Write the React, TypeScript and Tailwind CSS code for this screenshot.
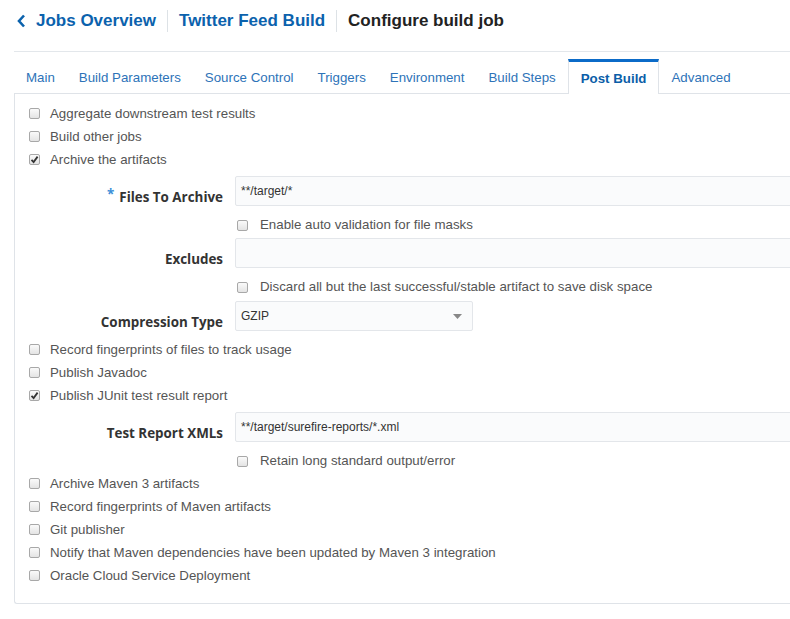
import type { ReactNode } from 'react'

const tabs = ['Main', 'Build Parameters', 'Source Control', 'Triggers', 'Environment', 'Build Steps', 'Post Build', 'Advanced']

function Box({ checked = false }: { checked?: boolean }) {
  return (
    <span className="flex h-[11px] w-[11px] shrink-0 items-center justify-center rounded-[2px] border border-[#a8a8a8] bg-gradient-to-b from-[#fafafa] to-[#e4e4e4]">
      {checked && (
        <svg width="9" height="9" viewBox="0 0 9 9">
          <path d="M1.5 4.8 L3.6 7 L7.6 1.6" fill="none" stroke="#333" strokeWidth="1.8" />
        </svg>
      )}
    </span>
  )
}

function Check({ label, checked, className = '' }: { label: string; checked?: boolean; className?: string }) {
  return (
    <div className={`flex h-[23px] items-center pl-[14px] ${className}`}>
      <Box checked={checked} />
      <span className="ml-[10px] text-[13.3px] text-[#555]">{label}</span>
    </div>
  )
}

function SubCheck({ label, className = '' }: { label: string; className?: string }) {
  return (
    <div className={`mt-[6px] flex h-[26px] items-center pl-[222px] ${className}`}>
      <Box />
      <span className="ml-[12px] text-[13.3px] text-[#555]">{label}</span>
    </div>
  )
}

function Field({ label, required, children, className = '' }: { label: string; required?: boolean; children: ReactNode; className?: string }) {
  return (
    <div className={`flex h-[30px] ${className}`}>
      <div className="w-[220px] shrink-0 pr-[12px] pt-[13px] text-right font-['Open_Sans'] text-[13.4px] font-bold leading-[16px] text-[#333]">
        {required && <span className="relative top-[-3px] mr-[5px] text-[#3c8fd8]">*</span>}
        {label}
      </div>
      {children}
    </div>
  )
}

function TextInput({ value = '' }: { value?: string }) {
  return (
    <div className="flex h-[30px] w-[600px] shrink-0 items-center rounded-[2px] border border-[#e3e6ea] bg-[#fafbfc] px-[5px] text-[12px] text-[#333]">
      {value}
    </div>
  )
}

export default function App() {
  return (
    <div className="h-[619px] w-[790px] overflow-hidden bg-white font-['Liberation_Sans',Arial,sans-serif]">
      {/* Breadcrumb header */}
      <div className="ml-[14px] flex h-[52px] items-start border-b border-[#e3e7eb] pt-[9px]">
        <div className="flex h-[23px] items-center text-[17px] font-bold">
          <svg width="9" height="14" viewBox="0 0 9 14" className="ml-[3px]">
            <path d="M7 1.5 L2 7 L7 12.5" fill="none" stroke="#0b62ad" strokeWidth="2.6" />
          </svg>
          <span className="ml-[10px] text-[#0b62ad]">Jobs Overview</span>
          <span className="mx-[11px] h-[22px] w-px bg-[#dde2e6]" />
          <span className="text-[#0b62ad]">Twitter Feed Build</span>
          <span className="mx-[11px] h-[22px] w-px bg-[#dde2e6]" />
          <span className="text-[#222]">Configure build job</span>
        </div>
      </div>

      {/* Tabs */}
      <div className="ml-[14px] flex h-[42px] items-end border-b border-[#dfe3e8]">
        {tabs.map((t) =>
          t === 'Post Build' ? (
            <div
              key={t}
              className="relative top-px flex h-[35px] items-center border-x border-t-[3px] border-x-[#dfe3e8] border-t-[#0b6bc8] bg-white px-[12px] pt-[1px] text-[13.3px] font-bold text-[#0b5ea8]"
            >
              {t}
            </div>
          ) : (
            <div key={t} className="flex h-[34px] items-center border-x border-transparent px-[11px] pt-[3px] text-[13.3px] text-[#2d73b8]">
              {t}
            </div>
          ),
        )}
      </div>

      {/* Post build panel */}
      <div className="ml-[14px] h-[510px] rounded-bl-[3px] border-b border-l border-[#dfe3e8] pt-[8px]">
        <Check label="Aggregate downstream test results" />
        <Check label="Build other jobs" />
        <Check label="Archive the artifacts" checked />
        <Field label="Files To Archive" required className="mt-[5px]">
          <TextInput value="**/target/*" />
        </Field>
        <SubCheck label="Enable auto validation for file masks" />
        <Field label="Excludes">
          <TextInput />
        </Field>
        <SubCheck label="Discard all but the last successful/stable artifact to save disk space" />
        <Field label="Compression Type" className="mt-px">
          <div className="flex h-[30px] w-[238px] shrink-0 items-center justify-between rounded-[2px] border border-[#e3e6ea] bg-[#fafbfc] pl-[5px] pr-[10px] text-[12px] text-[#333]">
            GZIP
            <svg width="9" height="5" viewBox="0 0 9 5">
              <path d="M0 0 L9 0 L4.5 5 Z" fill="#888" />
            </svg>
          </div>
        </Field>
        <Check label="Record fingerprints of files to track usage" className="mt-[7px]" />
        <Check label="Publish Javadoc" />
        <Check label="Publish JUnit test result report" checked />
        <Field label="Test Report XMLs" className="mt-[5px]">
          <TextInput value="**/target/surefire-reports/*.xml" />
        </Field>
        <SubCheck label="Retain long standard output/error" />
        <Check label="Archive Maven 3 artifacts" className="-mt-[2px]" />
        <Check label="Record fingerprints of Maven artifacts" />
        <Check label="Git publisher" />
        <Check label="Notify that Maven dependencies have been updated by Maven 3 integration" />
        <Check label="Oracle Cloud Service Deployment" />
      </div>
    </div>
  )
}
